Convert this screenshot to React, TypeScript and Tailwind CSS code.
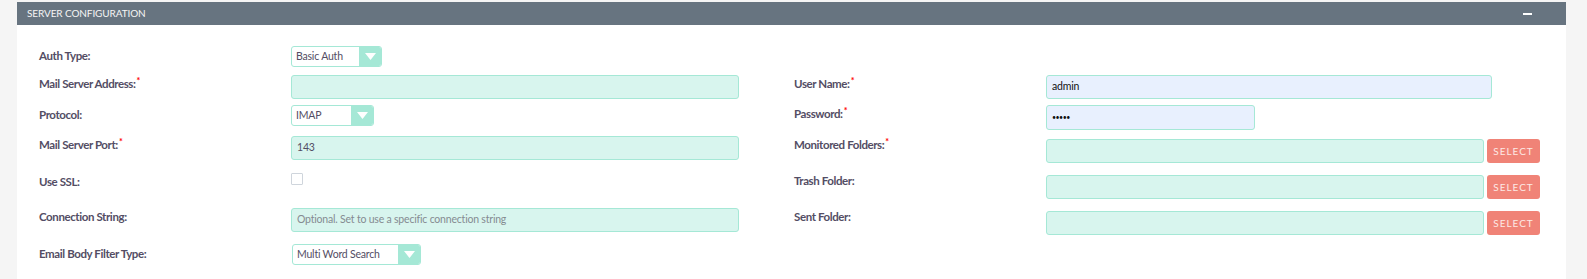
import React from "react";

const font = { fontFamily: "Lato, 'Open Sans', sans-serif" };

function Label({ text, req, pt }: { text: string; req?: boolean; pt: string }) {
  return (
    <div className={`w-[252px] shrink-0 text-[11.5px] font-bold leading-[16px] tracking-[-0.4px] text-[#534d64] ${pt}`}>
      {text}
      {req && <span className="text-[#ff0000] text-[9px] relative top-[-4px] ml-[1px]">*</span>}
    </div>
  );
}

function Select({ value, w }: { value: string; w: string }) {
  return (
    <div className={`flex h-[21px] ${w} rounded-[3px] border border-[#a5e8d6] overflow-hidden bg-white`}>
      <div className="flex-1 pl-[4px] text-[10.5px] tracking-[-0.2px] leading-[19px] text-[#534d64]">{value}</div>
      <div className="w-[22px] bg-[#a5e8d6] flex items-center justify-center">
        <svg width="11" height="7" viewBox="0 0 11 7">
          <path d="M0 0 L11 0 L5.5 7 Z" fill="#ffffff" />
        </svg>
      </div>
    </div>
  );
}

function Input({ w, value, placeholder, auto, pw, h = "h-[24px]" }: { w: string; value?: string; placeholder?: string; auto?: boolean; pw?: boolean; h?: string }) {
  return (
    <div
      className={`${w} ${h} rounded-[3px] border border-[#a5e8d6] pl-[5px] flex items-center text-[10.5px] tracking-[-0.2px] ${
        auto ? "bg-[#e8f0fe] text-[#111111]" : "bg-[#d8f5ee] text-[#534d64]"
      }`}
    >
      {pw ? <span className="text-[7px] tracking-[-0.5px] leading-none">•••••</span> : value}
      {placeholder && <span className="text-[#858b91]">{placeholder}</span>}
    </div>
  );
}

function SelectBtn() {
  return (
    <div className="ml-[3px] w-[53px] h-[24px] rounded-[3px] bg-[#f08377] text-[#fde9e5] text-[10px] tracking-[1px] flex items-center justify-center">
      SELECT
    </div>
  );
}

export default function App() {
  return (
    <div style={font} className="w-full h-[279px] bg-[#f5f5f5] pt-[2px] pl-[17px] pr-[21px]">
      <div className="h-[277px] bg-white">
        <div className="h-[23px] bg-[#677480] flex items-center justify-between pl-[10px] pr-[34px]">
          <span className="text-[10px] tracking-[-0.1px] text-[#f5f5f5] uppercase">Server Configuration</span>
          <div className="w-[9px] h-[2px] bg-white" />
        </div>
        <div className="flex pl-[22px] pt-[21px]">
          {/* left column */}
          <div className="w-[755px] shrink-0 flex flex-col">
            <div className="flex h-[29px] items-start">
              <Label text="Auth Type:" pt="pt-[2px]" />
              <Select value="Basic Auth" w="w-[91px]" />
            </div>
            <div className="flex h-[30px] items-start">
              <Label text="Mail Server Address:" req pt="pt-[1px]" />
              <Input w="w-[448px]" />
            </div>
            <div className="flex h-[31px] items-start">
              <Label text="Protocol:" pt="pt-[2px]" />
              <Select value="IMAP" w="w-[83px]" />
            </div>
            <div className="flex h-[37px] items-start">
              <Label text="Mail Server Port:" req pt="pt-[1px]" />
              <Input w="w-[448px]" value="143" />
            </div>
            <div className="flex h-[35px] items-start">
              <Label text="Use SSL:" pt="pt-[1px]" />
              <div className="w-[12px] h-[12px] border border-[#cfd5dc] bg-white rounded-[1px]" />
            </div>
            <div className="flex h-[36px] items-start">
              <Label text="Connection String:" pt="pt-[1px]" />
              <Input w="w-[448px]" placeholder="Optional. Set to use a specific connection string" />
            </div>
            <div className="flex h-[21px] items-start">
              <Label text="Email Body Filter Type:" pt="pt-[2px]" />
              <div className="ml-[1px]">
                <Select value="Multi Word Search" w="w-[129px]" />
              </div>
            </div>
          </div>
          {/* right column */}
          <div className="flex flex-col pt-[29px]">
            <div className="flex h-[30px] items-start">
              <Label text="User Name:" req pt="pt-[1px]" />
              <Input w="w-[446px]" value="admin" auto />
            </div>
            <div className="flex h-[34px] items-start">
              <Label text="Password:" req pt="pt-[1px]" />
              <Input w="w-[209px]" h="h-[25px]" pw auto />
            </div>
            <div className="flex h-[36px] items-start">
              <Label text="Monitored Folders:" req pt="pt-0 -mt-[2px]" />
              <Input w="w-[438px]" />
              <SelectBtn />
            </div>
            <div className="flex h-[36px] items-start">
              <Label text="Trash Folder:" pt="pt-0 -mt-[2px]" />
              <Input w="w-[438px]" />
              <SelectBtn />
            </div>
            <div className="flex h-[36px] items-start">
              <Label text="Sent Folder:" pt="pt-0 -mt-[2px]" />
              <Input w="w-[438px]" />
              <SelectBtn />
            </div>
          </div>
        </div>
      </div>
    </div>
  );
}
